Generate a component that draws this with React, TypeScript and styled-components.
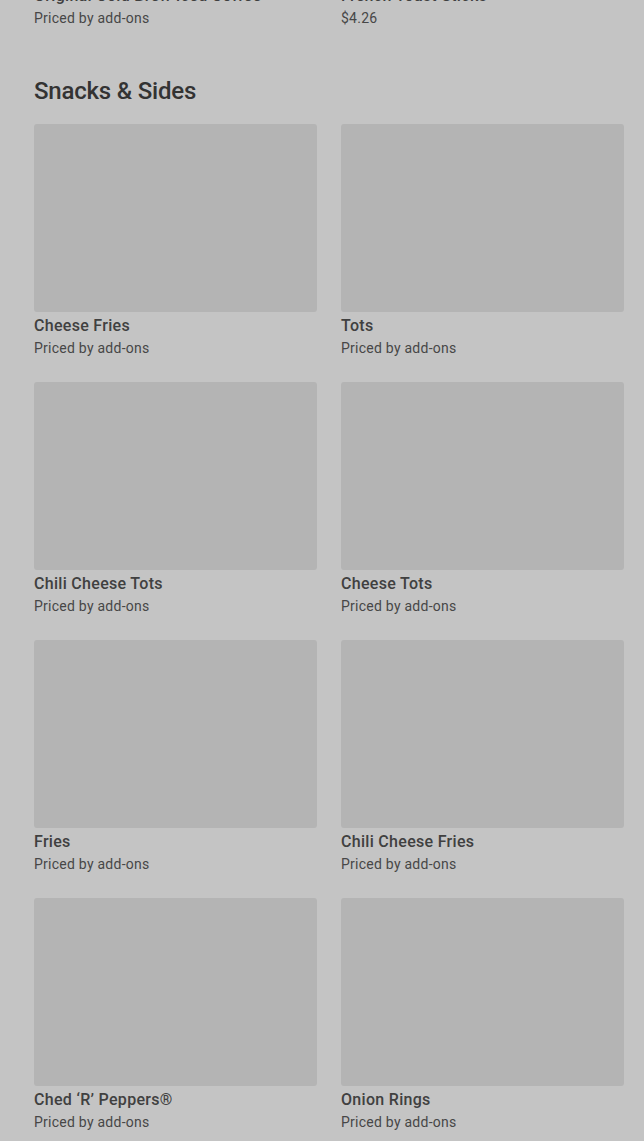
import React from 'react';
import styled, { createGlobalStyle } from 'styled-components';

type Item = { name: string; price: string };

const previousRow: Item[] = [
  { name: 'Original Cold Brew Iced Coffee', price: 'Priced by add-ons' },
  { name: 'French Toast Sticks', price: '$4.26' },
];

const snacks: Item[] = [
  { name: 'Cheese Fries', price: 'Priced by add-ons' },
  { name: 'Tots', price: 'Priced by add-ons' },
  { name: 'Chili Cheese Tots', price: 'Priced by add-ons' },
  { name: 'Cheese Tots', price: 'Priced by add-ons' },
  { name: 'Fries', price: 'Priced by add-ons' },
  { name: 'Chili Cheese Fries', price: 'Priced by add-ons' },
  { name: 'Ched ‘R’ Peppers®', price: 'Priced by add-ons' },
  { name: 'Onion Rings', price: 'Priced by add-ons' },
];

const GlobalStyle = createGlobalStyle`
  html, body {
    margin: 0;
    background: #c4c4c4;
    overflow: hidden;
  }
  body {
    font-family: Roboto, "Liberation Sans", sans-serif;
  }
`;

const Page = styled.div`
  height: 1141px;
  overflow: hidden;
`;

// the page is scrolled: the previous section's last row is mostly above the fold
const Scroller = styled.div`
  margin-top: -206px;
  padding: 0 20px 0 34px;
`;

const Section = styled.section`
  margin-bottom: 46px;
`;

const Heading = styled.h2`
  margin: 0 0 17px;
  font-size: 24px;
  line-height: 32px;
  font-weight: 500;
  color: #333333;
  letter-spacing: -0.2px;
`;

const Grid = styled.div`
  display: grid;
  grid-template-columns: 1fr 1fr;
  column-gap: 24px;
  row-gap: 23px;
`;

const Card = styled.div`
  display: flex;
  flex-direction: column;
`;

const Thumb = styled.div`
  height: 188px;
  background: #b4b4b4;
  border-radius: 3px;
`;

const Name = styled.div`
  margin-top: 2px;
  font-size: 16px;
  line-height: 24px;
  font-weight: 500;
  color: #404040;
  letter-spacing: 0.3px;
`;

const Price = styled.div`
  font-size: 14px;
  line-height: 21px;
  color: #474747;
  letter-spacing: 0.25px;
`;

const MenuCard = ({ item }: { item: Item }) => (
  <Card>
    <Thumb />
    <Name>{item.name}</Name>
    <Price>{item.price}</Price>
  </Card>
);

const App = () => (
  <Page>
    <GlobalStyle />
    <Scroller>
      <Section>
        <Grid>
          {previousRow.map((item) => (
            <MenuCard key={item.name} item={item} />
          ))}
        </Grid>
      </Section>
      <Section>
        <Heading>Snacks &amp; Sides</Heading>
        <Grid>
          {snacks.map((item) => (
            <MenuCard key={item.name} item={item} />
          ))}
        </Grid>
      </Section>
    </Scroller>
  </Page>
);

export default App;
